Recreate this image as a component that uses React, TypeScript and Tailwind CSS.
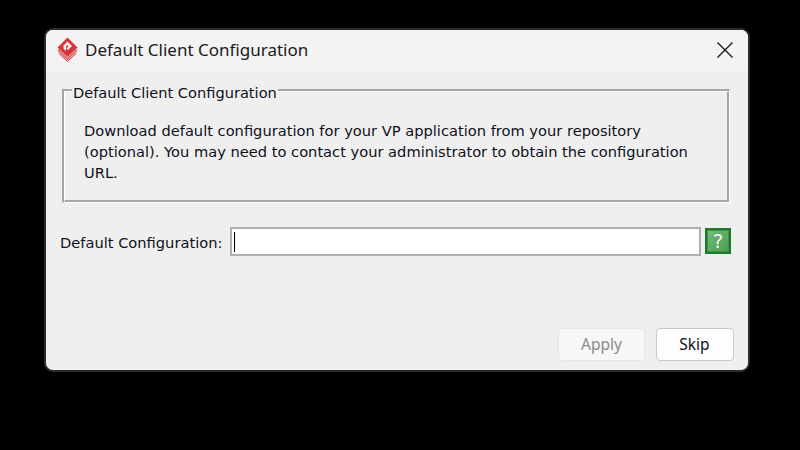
const body = { fontFamily: '"DejaVu Sans", sans-serif' };
const title = { fontFamily: '"Noto Sans", sans-serif' };

function Logo() {
  return (
    <svg width="21" height="25" viewBox="0 0 21 25" className="shrink-0">
      <path d="M10.5 0.5 L20.5 10.5 L10.5 20 L0.5 10.5 Z" fill="#d4343a" />
      <path d="M0.5 13.5 L2 12 L10.5 20.5 L19 12 L20.5 13.5 L10.5 23.5 Z" fill="#df6a6d" />
      <path d="M1.5 16 L10.5 24.5 L19.5 16" fill="none" stroke="#d4343a" strokeWidth="1" />
      <path d="M6.5 11.5 L6.5 8.5 L10.5 4.5 L15 9 L11 13 L9.5 11.5 L11.5 9 L10.5 8 L9 9.5 L9 14 Z" fill="#fbeeee" />
    </svg>
  );
}

export default function App() {
  return (
    <div className="w-[800px] h-[450px] bg-black overflow-hidden pt-[28px] pl-[44px]" style={body}>
      <div className="w-[706px] h-[344px] rounded-[9px] border-2 border-[#2b2b2b] bg-[#efefef] overflow-hidden flex flex-col">
        <div className="h-[41px] shrink-0 bg-[#f3f3f3] flex items-center pl-[11px] pr-[14px] pb-[2px]">
          <Logo />
          <span className="ml-[7px] text-[17px] text-[#1a1a1a]" style={title}>Default Client Configuration</span>
          <svg width="18" height="18" viewBox="0 0 18 18" className="ml-auto">
            <path d="M1.5 1.5 L16.5 16.5 M16.5 1.5 L1.5 16.5" stroke="#1a1a1a" strokeWidth="1.4" fill="none" />
          </svg>
        </div>
        <div className="flex-1 flex flex-col pl-[16px] pr-[14px] pb-[9px]">
          <div className="relative mt-[18px] w-[668px] h-[114px] border-t-2 border-l-2 border-r border-b border-t-[#a6a6a6] border-l-[#a6a6a6] border-r-white border-b-white">
            <div className="w-full h-full border-t border-l border-r-2 border-b-2 border-t-white border-l-white border-r-[#a6a6a6] border-b-[#a6a6a6] pl-[19px] pt-[28px]">
              <p className="text-[14.65px] leading-[21px] text-[#10101c] whitespace-nowrap">
                Download default configuration for your VP application from your repository<br />
                (optional). You may need to contact your administrator to obtain the configuration<br />
                URL.
              </p>
            </div>
            <span className="absolute left-[8px] top-[-7px] bg-[#efefef] px-[1px] text-[14.6px] leading-[18px] text-[#10101c]">Default Client Configuration</span>
          </div>
          <div className="mt-[24px] flex items-center">
            <span className="text-[14.65px] text-[#10101c] w-[170px] ml-[-2px] mt-[2px] shrink-0">Default Configuration:</span>
            <div className="w-[471px] h-[29px] shrink-0 bg-white border-2 border-[#b0b0b0] flex items-center pl-[2px]">
              <div className="w-[1px] h-[20px] bg-black" />
            </div>
            <div className="ml-[4px] mb-[2px] w-[26px] h-[26px] shrink-0 bg-gradient-to-br from-[#74bd79] to-[#4c9a52] border-2 border-[#1d7a2b] shadow-[inset_0_0_0_1px_#3f9247] flex items-center justify-center text-[#f2f7f2] text-[20px] leading-none">?</div>
          </div>
          <div className="mt-auto flex justify-end gap-[11px]">
            <button className="w-[87px] h-[33px] rounded-[4px] bg-[#f7f7f7] border border-[#e8e8e8] text-[15.5px] text-[#8a8a8a]" style={title}>Apply</button>
            <button className="w-[78px] h-[33px] rounded-[4px] bg-[#fdfdfd] border border-[#c8c8c8] text-[15.5px] text-[#10101c] pr-[1px]" style={title}>Skip</button>
          </div>
        </div>
      </div>
    </div>
  );
}
